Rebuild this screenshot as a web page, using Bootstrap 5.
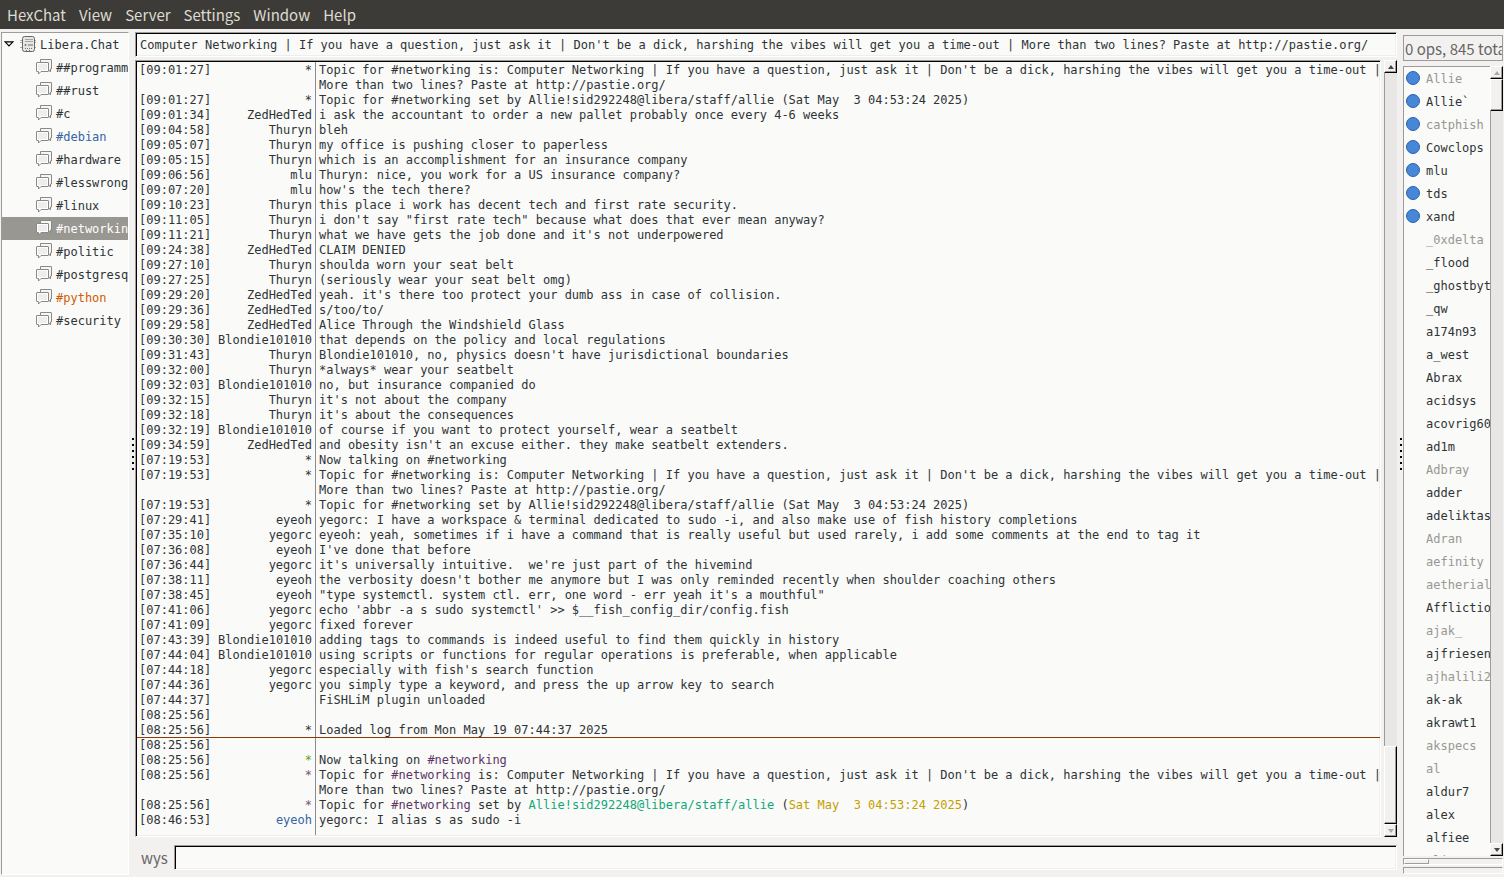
<!DOCTYPE html>
<html lang="en">
<head>
<meta charset="utf-8">
<meta name="viewport" content="width=device-width, initial-scale=1">
<title>HexChat</title>
<link href="https://cdn.jsdelivr.net/npm/bootstrap@5.3.0/dist/css/bootstrap.min.css" rel="stylesheet">
<style>
:root{--face:#f2f1f0;--paper:#fafaf9;--ink:#2e3436;--edge:#9d9c9a;--mono:"DejaVu Sans Mono",monospace;--ui:"Noto Sans CJK SC",sans-serif}
body{background:var(--face);color:var(--ink);font:12px/15px var(--mono);font-variant-ligatures:none}
.menubar{background:#3c3b37;height:29px;padding:0 7px;gap:13px;font:15px/30px var(--ui)}
.menubar a{color:#dfdbd2;text-decoration:none}
.workspace{padding:3px 1px 2px}
.tree{width:128px;border:1px solid #fff;border-top-color:var(--edge);border-left-color:var(--edge);background:var(--paper)}
.tree a{display:flex;align-items:center;height:23px;padding:2px 0 0 34px;gap:4px;color:var(--ink);text-decoration:none;white-space:nowrap}
.tree a svg{margin-bottom:3px}
.tree a.server{padding-left:2px}
.tree a.server .net{margin-left:2px}
.tree a.active{background:#999791;color:#fff}
.tree a.hilite{color:#3465a4}
.tree a.fresh{color:#ce5c00}
.grip{width:6px;padding-right:1px}
.grip i{width:2px;height:2px;background:#000}
.sunken{background:var(--paper);border:1px solid #fff;border-top-color:var(--edge);border-left-color:var(--edge);box-shadow:inset 1px 1px #000,inset -1px -1px #eee}
.field{border-radius:0;outline:0;height:25px;color:var(--ink);padding:0 4px;min-width:0}
.log{background-image:linear-gradient(#8a8a92,#8a8a92);background-size:1px 100%;background-position:179px 0;background-repeat:no-repeat;padding:2px 0 0 1px}
.log table{width:calc(100% + 4px);table-layout:fixed}
.log td{padding:0;vertical-align:top;height:15px;white-space:pre-wrap}
.log td:nth-child(1){width:77px;padding-left:2px}
.log td:nth-child(2){width:98px;text-align:right}
.log td:nth-child(3){padding-left:7px}
.log tr.seen td{box-shadow:inset 0 -1px #8f3902}
.c-green{color:#5aa80e}.c-plum{color:#75507b}.c-chan{color:#5c3566}.c-blue{color:#3465a4}.c-teal{color:#11a879}.c-gold{color:#c4a000}
.vbar{width:13px;background:#e8e7e6;border-left:1px solid var(--edge)}
.pane{margin-top:3px;gap:3px}
.raised{background:var(--face);border:1px solid #fff;border-right-color:#000;border-bottom-color:#000;box-shadow:inset -1px -1px var(--edge);margin-left:-1px}
.arrow{height:13px;padding:0;display:flex;align-items:center;justify-content:center;flex:none}
.entry{padding-left:6px;margin:8px 0 5px}
.entry label,.count{font:15px/24px var(--ui);color:#666}
.entry label{width:33px}
.side{width:100px;padding:3px 0 1px}
.count{height:26px;border:1px solid var(--edge);padding:1px 0 0 1px;white-space:nowrap;overflow:hidden}
.users{margin-top:5px}
.users ul{width:87px;flex:none;border-top:1px solid var(--edge);border-left:1px solid var(--edge);background:var(--paper)}
.users li{height:23px;line-height:25px;padding-left:22px;white-space:nowrap;position:relative}
.users .away{color:#999791}
.users .voiced::before{content:"";position:absolute;left:2px;top:4px;width:14px;height:14px;border-radius:50%;border:1px solid #2a62ad;background:#4687d8}
.meter{height:7px;border:1px solid #fff;border-top-color:var(--edge);border-left-color:var(--edge);margin-top:2px}
.meter i{display:block;width:25px;height:5px;border:1px solid #fff;border-right-color:var(--edge);border-bottom-color:var(--edge)}
svg{flex:none;display:block}
</style>
</head>
<body class="d-flex flex-column vh-100 overflow-hidden">
<svg width="0" height="0" class="position-absolute" aria-hidden="true">
<symbol id="chat" viewBox="0 0 16 16"><path d="M4.500 .5h10.500q.5 0 .5.500v9h-1v3l-2-2.500h-8z" fill="#f6f6f5" stroke="#888a85"/><path d="M1 3.500h11q.5 0 .5.500v8q0 .5-.5.500H5l-2.500 2.500v-2.500H1q-.5 0-.5-.500V4q0-.5.500-.5z" fill="#fff" stroke="#888a85"/><path d="M2 5h9v6H2z" fill="#eeeeef"/></symbol>
</svg>
<nav class="menubar d-flex flex-shrink-0" aria-label="Menu"><a href="#">HexChat</a><a href="#">View</a><a href="#">Server</a><a href="#">Settings</a><a href="#">Window</a><a href="#">Help</a></nav>
<main class="workspace d-flex flex-grow-1 overflow-hidden">
<nav class="tree flex-shrink-0 overflow-hidden" aria-label="Channels">
<a class="server" href="#"><svg width="10" height="6"><path d="M1 .8h8L5 5z" fill="#fff" stroke="#000" stroke-width="1.2"/></svg><svg class="net" width="16" height="16"><path d="M0 4.500h16M0 6.500h16M0 11.500h16" stroke="#aaa"/><rect x="2.500" y=".5" width="12" height="15" rx="2" fill="#e6e6e5" stroke="#666864"/><path d="M5 3.500h8M5 5.500h8" stroke="#a5a7a2"/><circle cx="5.500" cy="9" r="1" fill="#777"/><path d="M8 8h5v2H8z" fill="#aaa"/><path d="M5 12.500h1m1 0h1m1 0h1m1 0h1M6 14.500h1m2 0h1" stroke="#777"/></svg>Libera.Chat</a>
<a href="#"><svg width="16" height="16"><use href="#chat"/></svg>##programming</a>
<a href="#"><svg width="16" height="16"><use href="#chat"/></svg>##rust</a>
<a href="#"><svg width="16" height="16"><use href="#chat"/></svg>#c</a>
<a href="#" class="hilite"><svg width="16" height="16"><use href="#chat"/></svg>#debian</a>
<a href="#"><svg width="16" height="16"><use href="#chat"/></svg>#hardware</a>
<a href="#"><svg width="16" height="16"><use href="#chat"/></svg>#lesswrong</a>
<a href="#"><svg width="16" height="16"><use href="#chat"/></svg>#linux</a>
<a href="#" class="active"><svg width="16" height="16"><use href="#chat"/></svg>#networking</a>
<a href="#"><svg width="16" height="16"><use href="#chat"/></svg>#politic</a>
<a href="#"><svg width="16" height="16"><use href="#chat"/></svg>#postgresql</a>
<a href="#" class="fresh"><svg width="16" height="16"><use href="#chat"/></svg>#python</a>
<a href="#"><svg width="16" height="16"><use href="#chat"/></svg>#security</a>
</nav>
<div class="grip d-flex flex-column justify-content-center align-items-end flex-shrink-0"><div class="d-flex flex-column gap-1"><i></i><i></i><i></i><i></i><i></i><i></i></div></div>
<section class="d-flex flex-column flex-grow-1 overflow-hidden">
<input class="sunken field w-100" aria-label="Topic" value="Computer Networking | If you have a question, just ask it | Don't be a dick, harshing the vibes will get you a time-out | More than two lines? Paste at http://pastie.org/">
<div class="pane d-flex flex-grow-1 overflow-hidden">
<div class="log sunken flex-grow-1 overflow-hidden">
<table><tbody>
<tr><td>[09:01:27]</td><td>*</td><td>Topic for #networking is: Computer Networking | If you have a question, just ask it | Don't be a dick, harshing the vibes will get you a time-out | More than two lines? Paste at http://pastie.org/</td></tr>
<tr><td>[09:01:27]</td><td>*</td><td>Topic for #networking set by Allie!sid292248@libera/staff/allie (Sat May  3 04:53:24 2025)</td></tr>
<tr><td>[09:01:34]</td><td>ZedHedTed</td><td>i ask the accountant to order a new pallet probably once every 4-6 weeks</td></tr>
<tr><td>[09:04:58]</td><td>Thuryn</td><td>bleh</td></tr>
<tr><td>[09:05:07]</td><td>Thuryn</td><td>my office is pushing closer to paperless</td></tr>
<tr><td>[09:05:15]</td><td>Thuryn</td><td>which is an accomplishment for an insurance company</td></tr>
<tr><td>[09:06:56]</td><td>mlu</td><td>Thuryn: nice, you work for a US insurance company?</td></tr>
<tr><td>[09:07:20]</td><td>mlu</td><td>how's the tech there?</td></tr>
<tr><td>[09:10:23]</td><td>Thuryn</td><td>this place i work has decent tech and first rate security.</td></tr>
<tr><td>[09:11:05]</td><td>Thuryn</td><td>i don't say "first rate tech" because what does that ever mean anyway?</td></tr>
<tr><td>[09:11:21]</td><td>Thuryn</td><td>what we have gets the job done and it's not underpowered</td></tr>
<tr><td>[09:24:38]</td><td>ZedHedTed</td><td>CLAIM DENIED</td></tr>
<tr><td>[09:27:10]</td><td>Thuryn</td><td>shoulda worn your seat belt</td></tr>
<tr><td>[09:27:25]</td><td>Thuryn</td><td>(seriously wear your seat belt omg)</td></tr>
<tr><td>[09:29:20]</td><td>ZedHedTed</td><td>yeah. it's there too protect your dumb ass in case of collision.</td></tr>
<tr><td>[09:29:36]</td><td>ZedHedTed</td><td>s/too/to/</td></tr>
<tr><td>[09:29:58]</td><td>ZedHedTed</td><td>Alice Through the Windshield Glass</td></tr>
<tr><td>[09:30:30]</td><td>Blondie101010</td><td>that depends on the policy and local regulations</td></tr>
<tr><td>[09:31:43]</td><td>Thuryn</td><td>Blondie101010, no, physics doesn't have jurisdictional boundaries</td></tr>
<tr><td>[09:32:00]</td><td>Thuryn</td><td>*always* wear your seatbelt</td></tr>
<tr><td>[09:32:03]</td><td>Blondie101010</td><td>no, but insurance companied do</td></tr>
<tr><td>[09:32:15]</td><td>Thuryn</td><td>it's not about the company</td></tr>
<tr><td>[09:32:18]</td><td>Thuryn</td><td>it's about the consequences</td></tr>
<tr><td>[09:32:19]</td><td>Blondie101010</td><td>of course if you want to protect yourself, wear a seatbelt</td></tr>
<tr><td>[09:34:59]</td><td>ZedHedTed</td><td>and obesity isn't an excuse either. they make seatbelt extenders.</td></tr>
<tr><td>[07:19:53]</td><td>*</td><td>Now talking on #networking</td></tr>
<tr><td>[07:19:53]</td><td>*</td><td>Topic for #networking is: Computer Networking | If you have a question, just ask it | Don't be a dick, harshing the vibes will get you a time-out | More than two lines? Paste at http://pastie.org/</td></tr>
<tr><td>[07:19:53]</td><td>*</td><td>Topic for #networking set by Allie!sid292248@libera/staff/allie (Sat May  3 04:53:24 2025)</td></tr>
<tr><td>[07:29:41]</td><td>eyeoh</td><td>yegorc: I have a workspace &amp; terminal dedicated to sudo -i, and also make use of fish history completions</td></tr>
<tr><td>[07:35:10]</td><td>yegorc</td><td>eyeoh: yeah, sometimes if i have a command that is really useful but used rarely, i add some comments at the end to tag it</td></tr>
<tr><td>[07:36:08]</td><td>eyeoh</td><td>I've done that before</td></tr>
<tr><td>[07:36:44]</td><td>yegorc</td><td>it's universally intuitive.  we're just part of the hivemind</td></tr>
<tr><td>[07:38:11]</td><td>eyeoh</td><td>the verbosity doesn't bother me anymore but I was only reminded recently when shoulder coaching others</td></tr>
<tr><td>[07:38:45]</td><td>eyeoh</td><td>"type systemctl. system ctl. err, one word - err yeah it's a mouthful"</td></tr>
<tr><td>[07:41:06]</td><td>yegorc</td><td>echo 'abbr -a s sudo systemctl' &gt;&gt; $__fish_config_dir/config.fish</td></tr>
<tr><td>[07:41:09]</td><td>yegorc</td><td>fixed forever</td></tr>
<tr><td>[07:43:39]</td><td>Blondie101010</td><td>adding tags to commands is indeed useful to find them quickly in history</td></tr>
<tr><td>[07:44:04]</td><td>Blondie101010</td><td>using scripts or functions for regular operations is preferable, when applicable</td></tr>
<tr><td>[07:44:18]</td><td>yegorc</td><td>especially with fish's search function</td></tr>
<tr><td>[07:44:36]</td><td>yegorc</td><td>you simply type a keyword, and press the up arrow key to search</td></tr>
<tr><td>[07:44:37]</td><td></td><td>FiSHLiM plugin unloaded</td></tr>
<tr><td>[08:25:56]</td><td></td><td></td></tr>
<tr class="seen"><td>[08:25:56]</td><td>*</td><td>Loaded log from Mon May 19 07:44:37 2025</td></tr>
<tr><td>[08:25:56]</td><td></td><td></td></tr>
<tr><td>[08:25:56]</td><td class="c-green">*</td><td>Now talking on <span class="c-chan">#networking</span></td></tr>
<tr><td>[08:25:56]</td><td class="c-plum">*</td><td>Topic for <span class="c-chan">#networking</span> is: Computer Networking | If you have a question, just ask it | Don't be a dick, harshing the vibes will get you a time-out | More than two lines? Paste at http://pastie.org/</td></tr>
<tr><td>[08:25:56]</td><td class="c-plum">*</td><td>Topic for <span class="c-chan">#networking</span> set by <span class="c-teal">Allie!sid292248@libera/staff/allie</span> (<span class="c-gold">Sat May  3 04:53:24 2025</span>)</td></tr>
<tr><td>[08:46:53]</td><td class="c-blue">eyeoh</td><td>yegorc: I alias s as sudo -i</td></tr>
</tbody></table>
</div>
<div class="vbar d-flex flex-column flex-shrink-0">
<button class="raised arrow" aria-label="Scroll up"><svg width="6" height="4"><path d="M0 4 3 0l3 4z" fill="#444"/></svg></button>
<div class="flex-grow-1"></div>
<div class="raised thumb" style="height:10%"></div>
<button class="raised arrow" aria-label="Scroll down"><svg width="6" height="4"><path d="M0 0h6L3 4z" fill="#aaa"/></svg></button>
</div>
</div>
<form class="entry d-flex align-items-center"><label for="say">wys</label><input id="say" class="sunken field flex-grow-1"></form>
</section>
<div class="grip d-flex flex-column justify-content-center align-items-end flex-shrink-0"><div class="d-flex flex-column gap-1"><i></i><i></i><i></i><i></i><i></i><i></i></div></div>
<aside class="side d-flex flex-column flex-shrink-0">
<div class="count flex-shrink-0">0 ops, 845 total</div>
<div class="users d-flex flex-grow-1 overflow-hidden">
<ul class="list-unstyled mb-0 overflow-hidden">
<li class="voiced away">Allie</li><li class="voiced">Allie`</li><li class="voiced away">catphish</li><li class="voiced">Cowclops</li><li class="voiced">mlu</li><li class="voiced">tds</li><li class="voiced">xand</li>
<li class="away">_0xdelta</li><li>_flood</li><li>_ghostbyte</li><li>_qw</li><li>a174n93</li><li>a_west</li><li>Abrax</li><li>acidsys</li><li>acovrig60</li><li>ad1m</li><li class="away">Adbray</li><li>adder</li><li>adeliktas</li><li class="away">Adran</li><li class="away">aefinity</li><li class="away">aetherial</li><li>Affliction</li><li class="away">ajak_</li><li>ajfriesen</li><li class="away">ajhalili2006</li><li>ak-ak</li><li>akrawt1</li><li class="away">akspecs</li><li class="away">al</li><li>aldur7</li><li>alex</li><li>alfiee</li><li class="away">alice</li>
</ul>
<div class="vbar d-flex flex-column flex-shrink-0">
<button class="raised arrow" aria-label="Scroll users up"><svg width="6" height="4"><path d="M0 4 3 0l3 4z" fill="#aaa"/></svg></button>
<div class="raised thumb" style="height:4%"></div>
<div class="flex-grow-1"></div>
<button class="raised arrow" aria-label="Scroll users down"><svg width="6" height="4"><path d="M0 0h6L3 4z" fill="#444"/></svg></button>
</div>
</div>
<div class="meter flex-shrink-0"><i></i></div>
<div class="meter flex-shrink-0"></div>
</aside>
</main>
<script src="https://cdn.jsdelivr.net/npm/bootstrap@5.3.0/dist/js/bootstrap.bundle.min.js"></script>
</body>
</html>
